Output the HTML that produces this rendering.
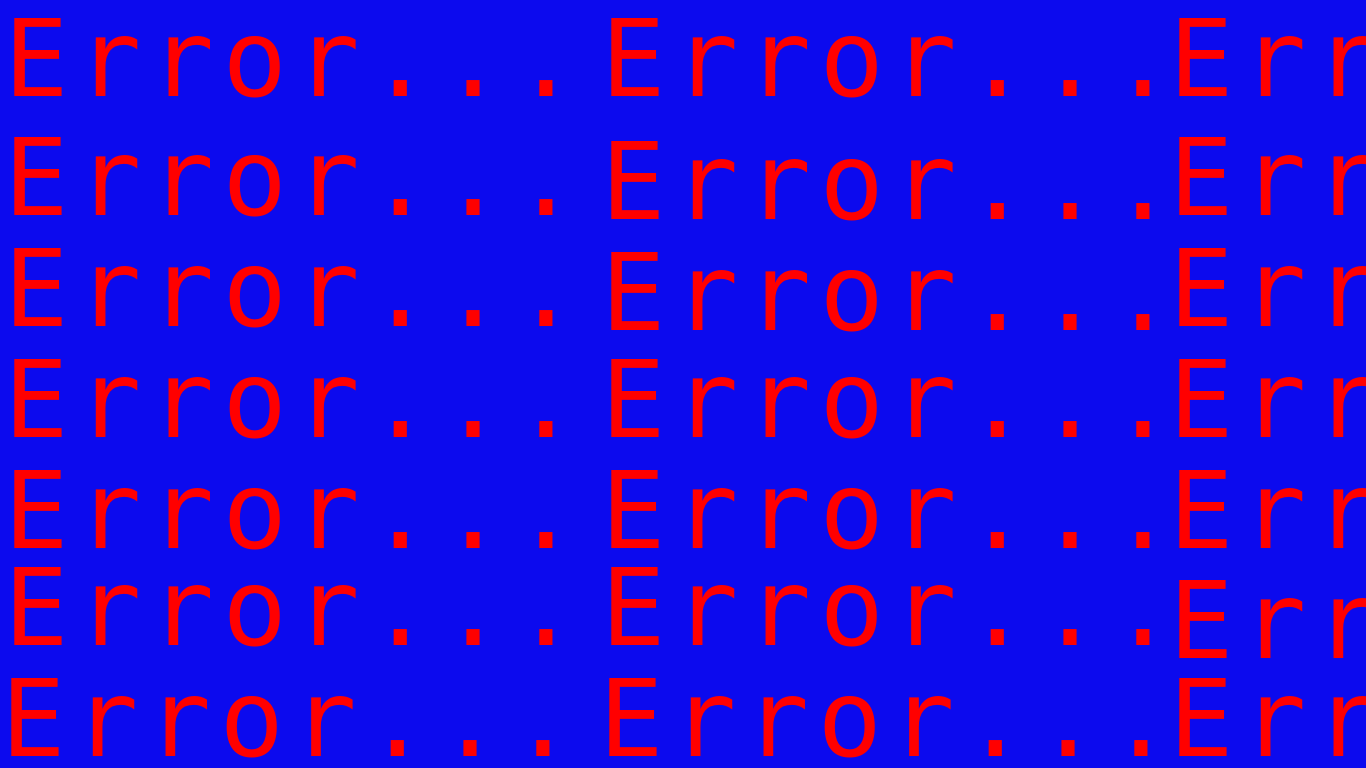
<!DOCTYPE html>
<html><head><meta charset="utf-8"><style>
html,body{margin:0;padding:0;width:1366px;height:768px;overflow:hidden;background:#0c0aee}
svg{display:block}
text{font-family:"DejaVu Sans Mono","Liberation Mono",monospace;font-size:107px;fill:#ff0000;font-weight:normal;letter-spacing:8.4px}
</style></head><body>
<svg width="1366" height="768" viewBox="0 0 1366 768">
<text x="4" y="96">Error...</text><text x="601" y="96">Error...</text><text x="1169" y="96">Error...</text>
<text x="4" y="215">Error...</text><text x="601" y="219">Error...</text><text x="1169" y="215">Error...</text>
<text x="4" y="326">Error...</text><text x="601" y="330">Error...</text><text x="1169" y="326">Error...</text>
<text x="4" y="437">Error...</text><text x="601" y="437">Error...</text><text x="1169" y="437">Error...</text>
<text x="4" y="548">Error...</text><text x="601" y="548">Error...</text><text x="1169" y="548">Error...</text>
<text x="4" y="645">Error...</text><text x="601" y="645">Error...</text><text x="1169" y="658">Error...</text>
<text x="1" y="756">Error...</text><text x="599" y="756">Error...</text><text x="1169" y="756">Error...</text>
</svg>
</body></html>
